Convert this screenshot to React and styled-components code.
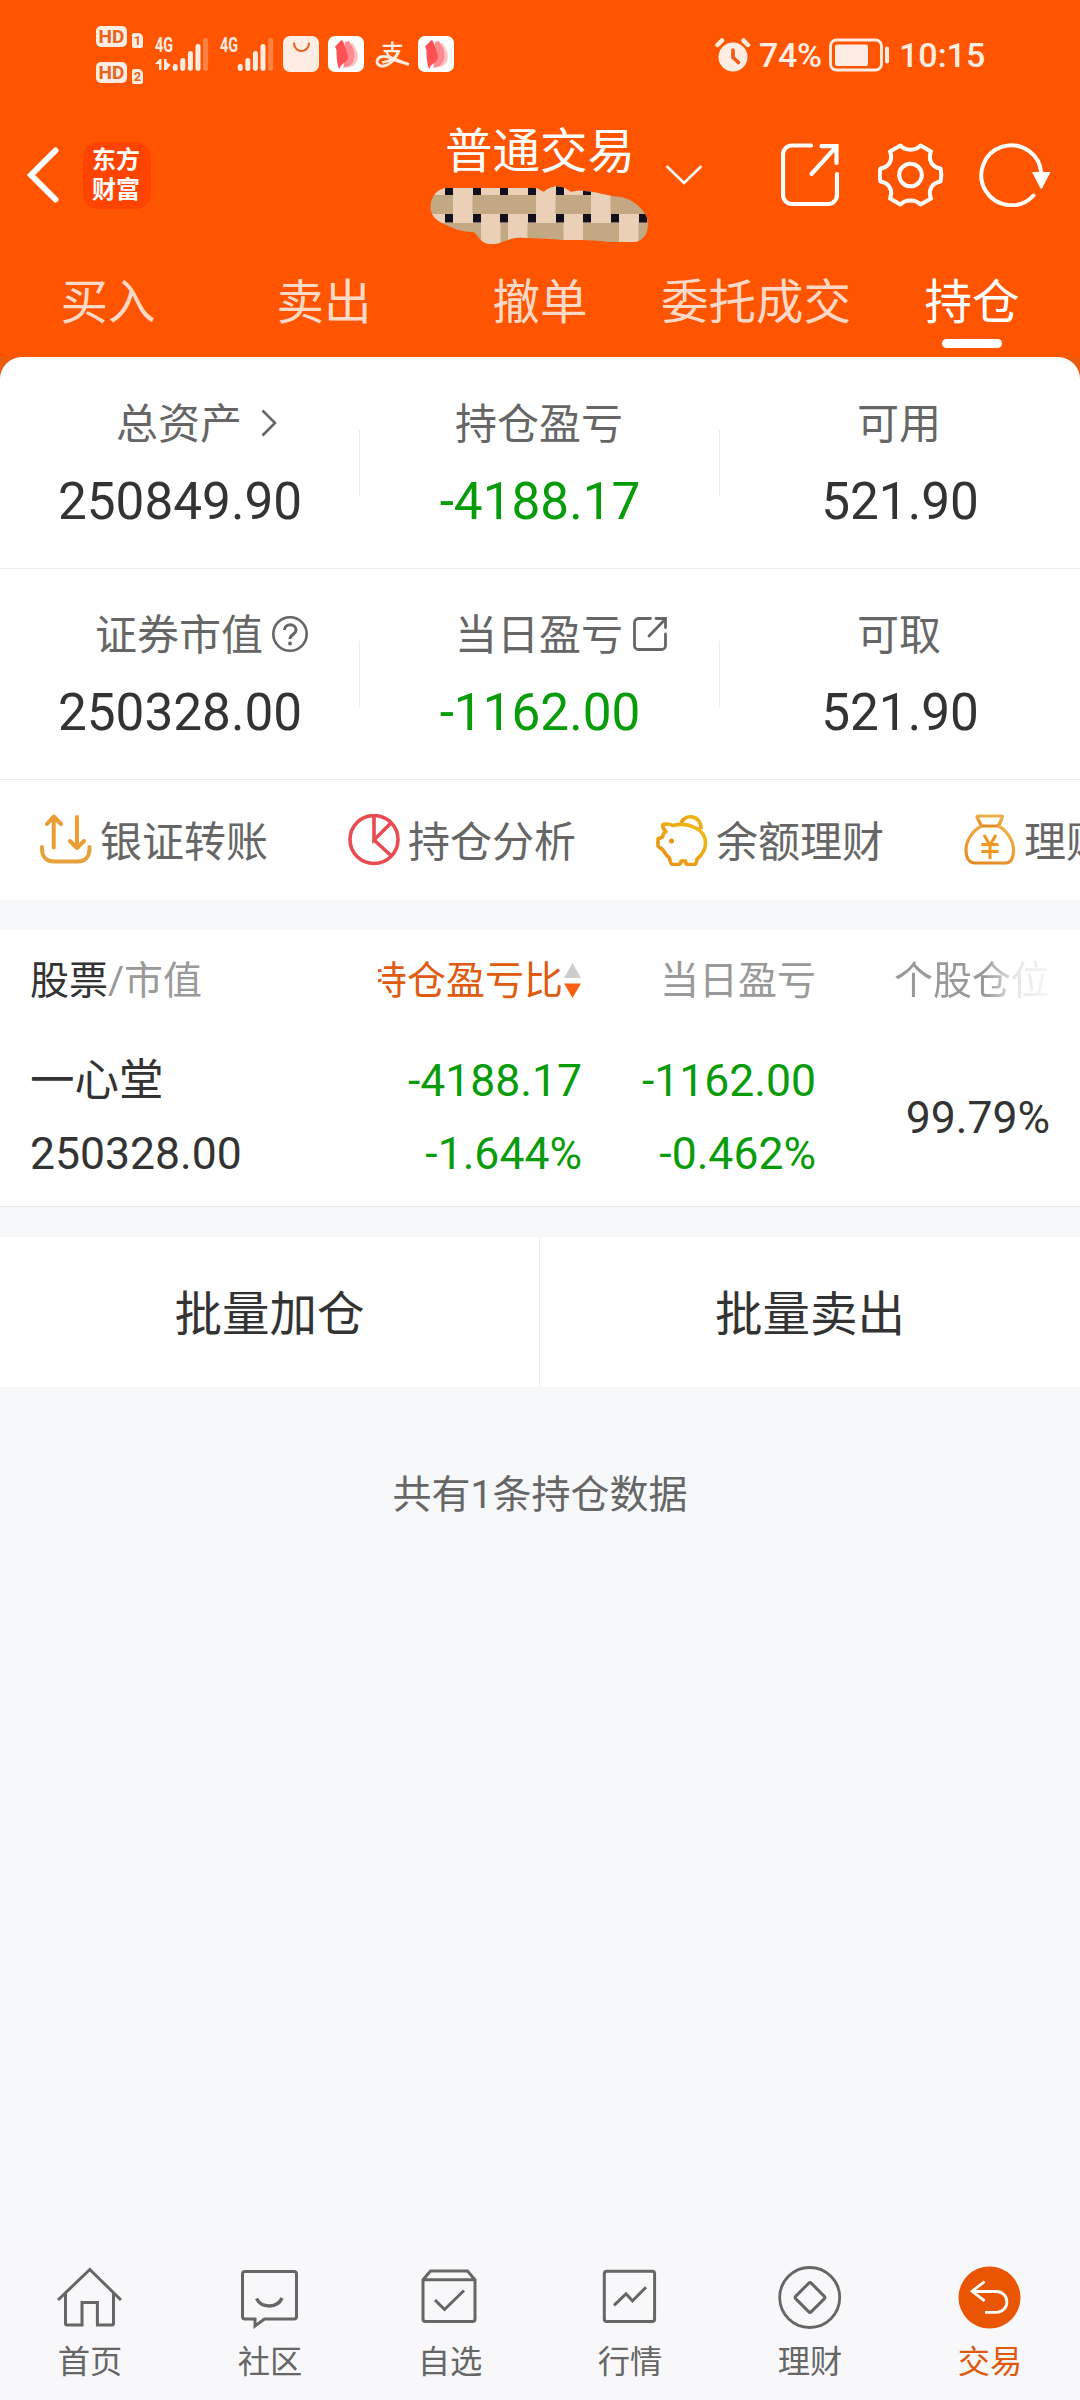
import styled, { createGlobalStyle } from 'styled-components'

const GREEN = '#089b0a'

const SUMMARY = [
  [
    { label: '总资产', value: '250849.90', icon: 'arrow' },
    { label: '持仓盈亏', value: '-4188.17', down: true },
    { label: '可用', value: '521.90' },
  ],
  [
    { label: '证券市值', value: '250328.00', icon: 'help' },
    { label: '当日盈亏', value: '-1162.00', icon: 'share', down: true },
    { label: '可取', value: '521.90' },
  ],
]

const TABS = ['买入', '卖出', '撤单', '委托成交', '持仓']

export default function App() {
  return (
    <Page>
      <GlobalStyle />
      <Top>
        <StatusBar />
        <Header />
        <Tabs>
          {TABS.map((tab) => (
            <Tab key={tab} $active={tab === '持仓'}>
              {tab}
            </Tab>
          ))}
        </Tabs>
      </Top>
      <PanelBack>
        <Panel>
          {SUMMARY.map((row, i) => (
            <SummaryRow key={i}>
              {row.map((item) => (
                <SummaryCell key={item.label}>
                  <SummaryLabel>
                    <span />
                    <span>{item.label}</span>
                    <LabelIcon $offset={item.icon === 'arrow' ? 19 : 9}>
                      {LABEL_ICONS[item.icon]}
                    </LabelIcon>
                  </SummaryLabel>
                  <SummaryValue $down={item.down}>{item.value}</SummaryValue>
                </SummaryCell>
              ))}
            </SummaryRow>
          ))}
          <Shortcuts>
            {SHORTCUTS.map(({ label, icon }) => (
              <Shortcut key={label}>
                {icon}
                <span>{label}</span>
              </Shortcut>
            ))}
          </Shortcuts>
        </Panel>
      </PanelBack>
      <Holdings>
        <TableHead>
          <HeadCell $left>
            <Strong>股票</Strong>/市值
          </HeadCell>
          <HeadCell $sorted>
            持仓盈亏比
            <SortIcon width="17" height="36" viewBox="0 0 17 36">
              <path d="M8.500 1l8.500 15H0z" fill="#ccc" />
              <path d="M8.500 36L0 21.500h17z" fill="#fb6012" />
            </SortIcon>
          </HeadCell>
          <HeadCell>当日盈亏</HeadCell>
          <FadeCell>个股仓位</FadeCell>
        </TableHead>
        <StockRow>
          <StockCell $left>
            <div>一心堂</div>
            <div>250328.00</div>
          </StockCell>
          <StockCell $down>
            <div>-4188.17</div>
            <div>-1.644%</div>
          </StockCell>
          <StockCell $down>
            <div>-1162.00</div>
            <div>-0.462%</div>
          </StockCell>
          <StockCell>
            <div>99.79%</div>
          </StockCell>
        </StockRow>
      </Holdings>
      <Actions>
        <Action>批量加仓</Action>
        <Action>批量卖出</Action>
      </Actions>
      <Total>共有1条持仓数据</Total>
      <Nav>
        {NAV.map(({ label, icon, active }) => (
          <NavItem key={label} $active={active}>
            <svg width="72" height="72" viewBox="0 0 72 72" fill="none" stroke="#666" strokeWidth="3">
              {icon}
            </svg>
            <span>{label}</span>
          </NavItem>
        ))}
      </Nav>
    </Page>
  )
}

function StatusBar() {
  return (
    <Status>
      <Badges>
        {[1, 2].map((n) => (
          <BadgeRow key={n}>
            <HdBadge>HD</HdBadge>
            <SimBadge>{n}</SimBadge>
          </BadgeRow>
        ))}
      </Badges>
      <Signal data />
      <Signal />
      <BagIcon width="36" height="36" viewBox="0 0 36 36">
        <rect width="36" height="36" rx="7" fill="#ffece3" />
        <path d="M11 7.500c1 10 14 10 15 0" fill="none" stroke="#e8631c" strokeWidth="2.200" strokeLinecap="round" />
      </BagIcon>
      <RedApp />
      <Pay width="34" height="36" viewBox="0 0 34 36">
        <text x="5" y="25" fontSize="23" fontWeight="500">
          支
        </text>
        <path d="M22 16C19 25 11 31 5 30C-1 29 0 21 7 20.500C15 20 24 26 33 28.500" />
      </Pay>
      <RedApp />
      <StatusRight>
        <svg width="36" height="34" viewBox="0 0 36 34">
          <circle cx="18" cy="19" r="14.500" fill="#ffece3" />
          <path d="M2.500 7l4.500-4.500M33 7l-4.500-4.500" stroke="#ffece3" strokeWidth="4.500" strokeLinecap="round" />
          <path d="M18 12v7.500l5.500 5" fill="none" stroke="#f4560f" strokeWidth="3.600" strokeLinecap="round" />
        </svg>
        <Percent>74%</Percent>
        <svg width="62" height="34" viewBox="0 0 62 34">
          <rect x="1.500" y="2" width="51" height="30" rx="6" fill="none" stroke="#ffece3" strokeWidth="2.800" />
          <rect x="6" y="6.500" width="33" height="21.500" rx="2" fill="#ffece3" />
          <rect x="56" y="8.500" width="4" height="17" rx="2" fill="#ffece3" />
        </svg>
        <Clock>10:15</Clock>
      </StatusRight>
    </Status>
  )
}

function Signal({ data }) {
  return (
    <SignalSvg width="53" height="36" viewBox="0 0 53 36">
      <text x="0" y="16" fontSize="20" fontWeight="700" textLength="18" lengthAdjust="spacingAndGlyphs">
        4G
      </text>
      {data && <path d="M0 28l4.500-5h2v11H4v-6zM9 23h2.500v3l4 3-4 5H9z" />}
      {[28, 22, 15, 8, 2].map((y, i) => (
        <rect key={y} x={17.700 + i * 7.600} y={y} width="5" height={35 - y} rx="2.400" opacity={i === 4 ? 0.3 : 1} />
      ))}
    </SignalSvg>
  )
}

function RedApp() {
  return (
    <AppSvg width="36" height="36" viewBox="0 0 36 36">
      <rect width="36" height="36" rx="7" fill="#fff" />
      <path d="M20 8l5-.5 4 8c2 7 0 12-5 15l-6 1z" fill="#ffc0c2" />
      <path d="M17 6l4-1 4.500 8c2 8 1 13-4 17l-6 2z" fill="#ff8b90" />
      <path d="M7 10.500L13.500 4l1.500 1 1.500 4 3.500 11c.5 4-2.500 6-7 9.500L11 33c-2-6-2.500-11-2.500-19z" fill="#ff5055" />
    </AppSvg>
  )
}

function Header() {
  return (
    <HeaderBar>
      <HeaderLeft>
        <svg width="32" height="56" viewBox="0 0 32 56">
          <path d="M28.500 3.500L4 28l24.500 24.500" fill="none" stroke="#fff" strokeWidth="6" strokeLinecap="round" />
        </svg>
        <Logo>
          <span>东方</span>
          <span>财富</span>
        </Logo>
      </HeaderLeft>
      <HeaderTitle>
        <span>普通交易</span>
        <Mosaic />
      </HeaderTitle>
      <HeaderRight>
        <Caret width="36" height="20" viewBox="0 0 36 20">
          <path d="M1.500 2L18 18 34.500 2" fill="none" stroke="#fff" strokeWidth="2.600" strokeLinecap="round" />
        </Caret>
        <svg width="58" height="64" viewBox="0 0 58 64" fill="none" stroke="#fff" strokeWidth="4.200" strokeLinecap="round">
          <path d="M30 2.500H11a9 9 0 0 0-9 9V52a9 9 0 0 0 9 9h36a9 9 0 0 0 9-9V31" />
          <path d="M30.500 31L55 4M40.500 3.200h15V20" />
        </svg>
        <Gear width="66" height="64" viewBox="0 0 66 64" fill="none" stroke="#fff" strokeWidth="4" strokeLinejoin="round">
          <path d="M22.500 2.500C27 8 38 8 42.500 2.500L53 8.500C50 16 53 24 62.500 25.500Q64 32 62.500 38.500C53 40 50 48 53 55.500L42.500 61.500C38 56 27 56 22.500 61.500L12 55.500C15 48 12 40 2.500 38.500Q1 32 2.500 25.500C12 24 15 16 12 8.500z" />
          <circle cx="32.500" cy="32" r="11.300" />
        </Gear>
        <Refresh width="74" height="64" viewBox="0 0 74 64">
          <path d="M54.500 52.500A30 30 0 1 1 62.300 31" fill="none" stroke="#fff" strokeWidth="4" strokeLinecap="round" />
          <path d="M53 29h18.500l-8.500 16.500h-1.500z" fill="#fff" />
        </Refresh>
      </HeaderRight>
    </HeaderBar>
  )
}

// brush stroke that hides the account number
function Mosaic() {
  return (
    <svg width="240" height="76" viewBox="0 0 240 76">
      <clipPath id="brush">
        <path d="M10.500 31C10.500 20 18 12 28 12H114C119 12 121 15 124 16C128 12 132 10.500 138 10.500C144 10.500 148 14 151 16C158 14 163 15 170 15.500C180 17 188 20 201 21C215 24 228 36 228 48C228 60 221 66 213 66H188C175 64 160 64 143 64C125 62.500 110 62.500 100 61.500C88 61.500 84 68 71 68C60 68 58 58 53 56C40 56 33 52 26 49C17 45 10.500 40 10.500 31Z" />
      </clipPath>
      <g clipPath="url(#brush)">
        <rect width="240" height="76" fill="#c3a983" />
        <g fill="#ead0b6">
          <rect y="0" width="191" height="19" />
          <rect y="38" width="219" height="9" />
          {[33, 116, 171].map((x) => (
            <rect key={x} x={x} y="19" width="19.500" height="20" />
          ))}
          {[61, 88, 143.500, 199].map((x) => (
            <rect key={x} x={x} y="38" width="19.500" height="38" />
          ))}
        </g>
        {[25, 53, 80, 108, 136, 163, 191, 219].map((x) => (
          <g key={x} fill="#12101f">
            {x < 190 && <rect x={x} y="10" width="8" height="9" />}
            <rect x={x} y="38" width="8" height="8.500" />
          </g>
        ))}
      </g>
    </svg>
  )
}

const LABEL_ICONS = {
  arrow: (
    <svg width="16" height="28" viewBox="0 0 16 28">
      <path d="M1.500 1.500L14 14 1.500 26.500" fill="none" stroke="#666" strokeWidth="2.600" />
    </svg>
  ),
  help: (
    <svg width="36" height="36" viewBox="0 0 36 36" fill="none" stroke="#666">
      <circle cx="18" cy="18" r="16.700" strokeWidth="2.600" />
      <path d="M12.500 14c0-7 11.500-7 11.500 0 0 4.500-6 4.500-6 9" strokeWidth="3" />
      <circle cx="18" cy="27.500" r="1.900" fill="#666" stroke="none" />
    </svg>
  ),
  share: (
    <svg width="36" height="36" viewBox="0 0 36 36" fill="none" stroke="#666" strokeWidth="2.800" strokeLinecap="round">
      <path d="M18.500 2.500H6.500a4 4 0 0 0-4 4v23a4 4 0 0 0 4 4h23a4 4 0 0 0 4-4V18" />
      <path d="M17 20L33 3.500M24 2.500h9.500v9" />
    </svg>
  ),
}

const SHORTCUTS = [
  {
    label: '银证转账',
    icon: (
      <svg width="52" height="52" viewBox="0 0 52 52" fill="none" stroke="#eb9c32" strokeWidth="4" strokeLinecap="round" strokeLinejoin="round">
        <path d="M13.700 33.500V3M7 10l6.700-7.500L21 10M37 3v30.500M30 27l7 7 7-7" />
        <path d="M2 33v2c0 8 5 12.500 12 12.500h23.500c7 0 12-4.500 12-12.500v-2" stroke="#e4a13c" />
      </svg>
    ),
  },
  {
    label: '持仓分析',
    icon: (
      <svg width="52" height="52" viewBox="0 0 52 52" fill="none" stroke="#e84b50" strokeWidth="3.600">
        <circle cx="26" cy="25.500" r="24" />
        <path d="M26 1.500V26L42.500 9.500M26 26l17.500 16" />
      </svg>
    ),
  },
  {
    label: '余额理财',
    icon: (
      <svg width="52" height="52" viewBox="0 0 52 52" fill="none" stroke="url(#pig)" strokeWidth="3.600" strokeLinejoin="round">
        <defs>
          <linearGradient id="pig" x1="0" y1="1" x2="1" y2="0">
            <stop offset="0" stopColor="#e88c14" />
            <stop offset="1" stopColor="#f2bd14" />
          </linearGradient>
        </defs>
        <path d="M25 11C26 -1 46 0 45 15" />
        <path d="M7 10.500Q12 9 17 11.500C31 8 49.500 14 49.500 29C49.500 36 46 41 41 45Q40.500 50.500 38 50.500H32Q29.500 50.500 29.500 47H25Q25 50.500 22 50.500H17Q14.500 50.500 13.500 44C9 41 8.500 37 6.500 35.500L2 32V25L6.500 23C7 20 9 18 10 17.500Q6 14 7 10.500Z" />
        <circle cx="15.500" cy="27" r="2.500" fill="#e8960f" stroke="none" />
      </svg>
    ),
  },
  {
    label: '理财超市',
    icon: (
      <svg width="52" height="52" viewBox="0 0 52 52" fill="none" stroke="url(#bag)" strokeWidth="3.200" strokeLinejoin="round">
        <defs>
          <linearGradient id="bag" x1="0" y1="1" x2="0.4" y2="0">
            <stop offset="0" stopColor="#e5861c" />
            <stop offset="1" stopColor="#edb04a" />
          </linearGradient>
        </defs>
        <path d="M14 2h23.500q1.500 0 .8 1.500L34.500 12h-17L13.200 3.500Q12.500 2 14 2z" />
        <path d="M17.500 12C8 17 2 27 2 36c0 9 4 13 9 13h30c5 0 8.500-4 8.500-13 0-9-6-19-15-24" />
        <path d="M20 21l6 10 6-10M26 31v14M17.500 30.500h17M17.500 37.500h17" stroke="#f0951e" strokeWidth="3" />
      </svg>
    ),
  },
]

const NAV = [
  {
    label: '首页',
    icon: <path d="M4 38L35.800 7.500 67 38M11.500 31v30.500q0 1.500 1.500 1.500h15V40.500h15.400V63H58q1.500 0 1.500-1.500V31" />,
  },
  {
    label: '社区',
    icon: (
      <>
        <path d="M11 9.500h49q2.500 0 2.500 2.500v42.500q0 2.500-2.500 2.500H30.500L21 64v-7H11q-2.500 0-2.500-2.500V12q0-2.500 2.500-2.500z" />
        <path d="M22.500 36.500c5 10 21 10 25.500-.5" strokeWidth="3.400" />
      </>
    ),
  },
  {
    label: '自选',
    icon: (
      <>
        <path d="M9 17.700L16.500 9h37L61 17.700V57q0 2.500-2.500 2.500h-47Q9 59.500 9 57zM9 17.700h52" />
        <path d="M21 38l9.500 9.500L50 28.500" />
      </>
    ),
  },
  {
    label: '行情',
    icon: (
      <>
        <rect x="10.300" y="9.300" width="50.300" height="50.300" rx="2.500" />
        <path d="M20 43.300l12-11.500 6.500 7L52 25.300" />
      </>
    ),
  },
  {
    label: '理财',
    icon: (
      <>
        <circle cx="35.700" cy="35.500" r="30" strokeWidth="2.800" />
        <rect x="25" y="24.500" width="22" height="22" rx="2" transform="rotate(45 36 35.500)" />
      </>
    ),
  },
  {
    label: '交易',
    active: true,
    icon: (
      <>
        <circle cx="35.500" cy="35.500" r="31" fill="#ea5504" stroke="none" />
        <path d="M30.600 19.500l-12.500 9.800 12.500 9.500M18 29.500h24.500a10.400 10.400 0 0 1 0 20.800H31" stroke="#fff" strokeWidth="2.800" />
      </>
    ),
  },
]

const GlobalStyle = createGlobalStyle`
  body {
    margin: 0;
    font-family: Roboto, 'Noto Sans CJK SC', sans-serif;
    color: #333;
  }
  svg {
    display: block;
    flex: none;
  }
`

const Page = styled.div`
  width: 1080px;
  height: 2400px;
  display: flex;
  flex-direction: column;
  background: #f7f8fa;
  overflow: hidden;
`

const Top = styled.div`
  background: #ff5500;
  color: #fff;
`

const Status = styled.div`
  height: 110px;
  box-sizing: border-box;
  padding: 26px 96px 0 96px;
  display: flex;
  align-items: flex-start;
  color: #ffece3;
`
const Badges = styled.div`
  display: flex;
  flex-direction: column;
  gap: 15px;
  margin-right: 12px;
`
const BadgeRow = styled.div`
  display: flex;
  align-items: flex-end;
  gap: 5px;
`
const HdBadge = styled.span`
  width: 31px;
  height: 21px;
  border-radius: 5px;
  background: #ffece3;
  color: #e8631c;
  font-size: 19px;
  font-weight: 700;
  line-height: 21px;
  text-align: center;
`
const SimBadge = styled.span`
  width: 11px;
  height: 15px;
  margin-bottom: -1px;
  border-radius: 2px 5px 2px 2px;
  background: #ffece3;
  color: #e8631c;
  font-size: 13px;
  font-weight: 700;
  line-height: 16px;
  text-align: center;
`
const SignalSvg = styled.svg`
  margin: 10px 12px 0 0;
  fill: #ffece3;
  overflow: visible;
`
const BagIcon = styled.svg`
  margin: 10px 9px 0 -2px;
`
const AppSvg = styled.svg`
  margin-top: 10px;
`
const Pay = styled.svg`
  margin: 10px 8px 0 12px;
  overflow: visible;

  text {
    fill: #ffece3;
  }
  path {
    fill: none;
    stroke: #ffece3;
    stroke-width: 2.8;
  }
`
const StatusRight = styled.div`
  margin: 12px 0 0 auto;
  display: flex;
  align-items: center;
  height: 34px;
  font-size: 34px;
  font-weight: 500;
  line-height: 34px;
`
const Percent = styled.span`
  width: 63px;
  margin: 0 7px 0 8px;
  letter-spacing: -0.3px;
`
const Clock = styled.span`
  margin-left: 8px;
  width: 85px;
`

const HeaderBar = styled.div`
  height: 142px;
  display: grid;
  grid-template-columns: 420px 240px 420px;
`
const HeaderLeft = styled.div`
  display: flex;
  align-items: center;
  gap: 24px;
  padding: 0 0 12px 27px;
`
const Logo = styled.div`
  width: 68px;
  height: 67px;
  box-sizing: border-box;
  padding: 3px 2px 0 0;
  display: flex;
  flex-direction: column;
  align-items: center;
  border-radius: 15px;
  background: #ff4300;
  font-size: 24px;
  font-weight: 700;
  line-height: 30px;
`
const HeaderTitle = styled.div`
  padding-top: 18px;
  font-size: 47.5px;
  line-height: 48px;
  text-align: center;
`
const HeaderRight = styled.div`
  display: flex;
  align-items: center;
  padding: 0 0 12px 6px;
`
const Caret = styled.svg`
  margin-right: 79px;
`
const Gear = styled.svg`
  margin-left: 39px;
`
const Refresh = styled.svg`
  margin-left: 35px;
`

const Tabs = styled.div`
  height: 105px;
  display: grid;
  grid-template-columns: repeat(5, 1fr);
`
const Tab = styled.div`
  padding-top: 27px;
  font-size: 47.5px;
  line-height: 48px;
  text-align: center;
  color: ${(p) => (p.$active ? '#fff' : '#ffd9c7')};

  &::after {
    content: '';
    display: block;
    width: 60px;
    height: 9px;
    margin: 12px auto 0;
    border-radius: 5px;
    background: ${(p) => (p.$active ? '#fff' : 'transparent')};
  }
`

const PanelBack = styled.div`
  background: #ec5a0c;
`
const Panel = styled.div`
  padding-top: 1px;
  border-radius: 22px 22px 0 0;
  background: #fff;
  overflow: hidden;
`
const SummaryRow = styled.div`
  height: 210px;
  display: grid;
  grid-template-columns: 360px 360px 360px;
  border-bottom: 1px solid #ebebeb;
`
const SummaryCell = styled.div`
  padding-top: 46px;
  background: linear-gradient(#ebebeb, #ebebeb) no-repeat 359px 72px / 1px 66px;

  &:last-child {
    background: none;
  }
`
const SummaryLabel = styled.div`
  display: grid;
  grid-template-columns: 1fr auto 1fr;
  align-items: center;
  height: 42px;
  padding-right: 2px;
  font-size: 42px;
  line-height: 42px;
  color: #666;
`
const LabelIcon = styled.span`
  margin: -5px 0 0 ${(p) => p.$offset}px;
`
const SummaryValue = styled.div`
  margin-top: 30px;
  font-size: 51.3px;
  line-height: 52px;
  text-align: center;
  color: ${(p) => (p.$down ? GREEN : '#333')};
`

const Shortcuts = styled.div`
  height: 120px;
  display: flex;
  padding-left: 40px;
`
const Shortcut = styled.div`
  flex: none;
  width: 308px;
  display: flex;
  align-items: center;
  gap: 8px;
  font-size: 42px;
  line-height: 46px;
  color: #666;
  white-space: nowrap;

  span {
    padding-top: 5px;
  }
`

const Holdings = styled.div`
  margin-top: 30px;
  background: #fff;
  border-bottom: 1px solid #ebebeb;
`
const TableHead = styled.div`
  height: 102px;
  padding: 0 30px;
  display: grid;
  grid-template-columns: 348px 204px 234px 234px;
  align-items: center;
`
const HeadCell = styled.div`
  display: flex;
  align-items: center;
  justify-content: ${(p) => (p.$left ? 'flex-start' : 'flex-end')};
  height: 48px;
  font-size: 39px;
  line-height: 48px;
  color: ${(p) => (p.$sorted ? '#e05a0f' : '#999')};
  white-space: nowrap;
  overflow: hidden;
`
const Strong = styled.span`
  color: #333;
`
const SortIcon = styled.svg`
  margin: -3px 1px 0 1px;
`
const FadeCell = styled(HeadCell)`
  mask-image: linear-gradient(90deg, #000 168px, rgba(0, 0, 0, 0.25) 200px, rgba(0, 0, 0, 0.08) 234px);
`
const StockRow = styled.div`
  height: 174px;
  padding: 0 30px;
  box-sizing: border-box;
  padding-bottom: 2px;
  display: grid;
  grid-template-columns: 348px 204px 234px 234px;
  align-items: center;
`
const StockCell = styled.div`
  font-size: 44.5px;
  line-height: 73px;
  text-align: ${(p) => (p.$left ? 'left' : 'right')};
  color: ${(p) => (p.$down ? GREEN : '#333')};
`

const Actions = styled.div`
  margin-top: 30px;
  display: grid;
  grid-template-columns: 1fr 1fr;
  background: #fff;
`
const Action = styled.div`
  height: 150px;
  font-size: 47.5px;
  line-height: 156px;
  text-align: center;

  &:first-child {
    border-right: 1px solid #ebebeb;
  }
`
const Total = styled.div`
  margin-top: 89px;
  font-size: 39px;
  line-height: 39px;
  text-align: center;
  color: #666;
`

const Nav = styled.div`
  margin-top: auto;
  height: 160px;
  display: grid;
  grid-template-columns: repeat(6, 1fr);
  background: #f8f8fa;
`
const NavItem = styled.div`
  display: flex;
  flex-direction: column;
  align-items: center;
  gap: 12px;
  padding-top: 22px;
  font-size: 32.3px;
  line-height: 33px;
  color: ${(p) => (p.$active ? '#df5a10' : '#666')};
`
